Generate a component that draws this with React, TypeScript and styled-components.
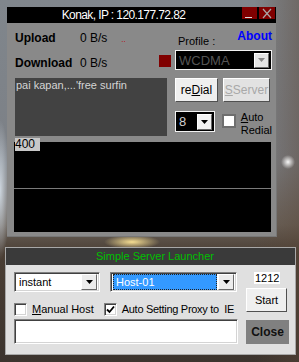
import React from "react";
import styled, { createGlobalStyle } from "styled-components";

const GlobalStyle = createGlobalStyle`
  html, body { margin: 0; padding: 0; }
  body {
    width: 299px;
    height: 362px;
    overflow: hidden;
    font-family: "Liberation Sans", Arial, sans-serif;
    background:
      radial-gradient(circle at 288px 162px, rgba(255,255,255,0.95) 0, rgba(255,255,255,0) 7px),
      radial-gradient(ellipse 28px 7px at 132px 242px, rgba(255,230,150,0.95), rgba(255,230,150,0) 100%),
      radial-gradient(ellipse 10px 70px at 0px 190px, rgba(215,225,235,0.9), rgba(215,225,235,0) 100%),
      linear-gradient(to right, rgba(0,0,0,0) 85%, rgba(90,70,55,0.45) 100%),
      linear-gradient(to bottom, #80868c 0%, #7c8086 45%, #6a625a 62%, #4a3e34 70%, #3c342e 100%);
  }
`;

const Screen = styled.div`
  display: flex;
  flex-direction: column;
  align-items: flex-start;
  padding-top: 7px;
`;

/* ---------- dialer window ---------- */

const MainWindow = styled.div`
  margin-left: 7px;
  width: 270px;
  height: 230px;
  box-sizing: border-box;
  background: #898989;
  border-right: 1px solid #777;
  border-bottom: 1px solid #777;
  display: flex;
  flex-direction: column;
`;

const TitleBar = styled.div`
  height: 16px;
  background: #000;
  display: flex;
  align-items: flex-start;
  padding-right: 1px;
`;

const TitleText = styled.div`
  flex: 1;
  text-align: center;
  color: #fff;
  font-size: 12px;
  letter-spacing: -0.6px;
  line-height: 16px;
`;

const CaptionButton = styled.div<{ $w: number }>`
  width: ${({ $w }) => $w}px;
  height: 12px;
  margin-left: 2px;
  background: #800000;
  display: flex;
  align-items: flex-end;
  justify-content: center;
`;

const MinBar = styled.div`
  width: 7px;
  height: 1px;
  margin: 0 3px 1px 0;
  background: #ddd;
`;

const TopBody = styled.div`
  display: flex;
  flex-direction: column;
  padding: 0 4px 0 8px;
`;

const TopGrid = styled.div`
  display: grid;
  grid-template-columns: 156px 97px;
  column-gap: 4px;
`;

const Column = styled.div`
  display: flex;
  flex-direction: column;
`;

const StatRow = styled.div<{ $top: number }>`
  display: flex;
  align-items: center;
  height: 15px;
  margin-top: ${({ $top }) => $top}px;
`;

const StatLabel = styled.span`
  width: 65px;
  font-weight: bold;
  font-size: 12px;
  color: #000;
`;

const StatValue = styled.span`
  font-size: 12px;
  color: #000;
`;

const Dots = styled.span`
  margin-left: 14px;
  margin-top: 4px;
  font-size: 8px;
  color: #c00000;
`;

const Led = styled.div`
  margin-left: auto;
  align-self: flex-start;
  width: 12px;
  height: 12px;
  background: #800000;
`;

const LogBox = styled.div`
  margin-top: 8px;
  width: 152px;
  height: 58px;
  box-sizing: border-box;
  padding: 1px 1px;
  background: #424242;
  color: #d4d4d4;
  font-size: 11px;
  line-height: 13px;
`;

const HeadRow = styled.div`
  height: 27px;
  box-sizing: border-box;
  padding-top: 6px;
  display: flex;
  justify-content: space-between;
  align-items: flex-start;
`;

const ProfileLabel = styled.span`
  margin: 6px 0 0 3px;
  font-size: 11px;
  color: #000;
`;

const AboutLink = styled.span`
  font-weight: bold;
  font-size: 12px;
  color: #0000ff;
`;

const DarkSelect = styled.div<{ $h: number; $w?: number; $size: number; $color: string }>`
  height: ${({ $h }) => $h}px;
  width: ${({ $w }) => ($w ? `${$w}px` : "auto")};
  box-sizing: border-box;
  border: 1px solid #f2f2f2;
  background: #000;
  display: flex;
  align-items: center;
  padding-left: 3px;
  color: ${({ $color }) => $color};
  font-size: ${({ $size }) => $size}px;
`;

const SelectText = styled.span`
  flex: 1;
`;

const DropButton = styled.div<{ $w: number; $h: number; $bg: string }>`
  width: ${({ $w }) => $w}px;
  height: ${({ $h }) => $h}px;
  flex-shrink: 0;
  margin-right: 2px;
  box-sizing: border-box;
  background: ${({ $bg }) => $bg};
  border: 1px solid;
  border-color: #fff #6a6a6a #6a6a6a #fff;
  display: flex;
  align-items: center;
  justify-content: center;
`;

const ButtonRow = styled.div`
  display: flex;
  gap: 5px;
  margin-top: 8px;
`;

const WinButton = styled.div<{ $w: number; $disabled?: boolean }>`
  width: ${({ $w }) => $w}px;
  height: 24px;
  box-sizing: border-box;
  border: 1px solid;
  border-color: #fff #505050 #505050 #fff;
  background: ${({ $disabled }) => ($disabled ? "#e2e2e2" : "#efefef")};
  color: ${({ $disabled }) => ($disabled ? "#a8a8a8" : "#000")};
  font-size: 12px;
  display: flex;
  align-items: center;
  justify-content: center;
`;

const OptionRow = styled.div`
  display: flex;
  align-items: flex-start;
  margin-top: 9px;
`;

const AutoBox = styled.div`
  margin: 3px 0 0 7px;
  width: 14px;
  height: 14px;
  box-sizing: border-box;
  border: 2px solid #6e6e6e;
  background: #fff;
`;

const AutoLabel = styled.div`
  margin-left: 5px;
  font-size: 11px;
  line-height: 13px;
  color: #000;
`;

const Chart = styled.div`
  position: relative;
  margin: 5px 1px 0 -1px;
  height: 90px;
  background: #000;

  &::after {
    content: "";
    position: absolute;
    left: 0;
    right: 0;
    top: 46px;
    height: 1px;
    background: #7a7a7a;
  }
`;

const ChartScale = styled.div`
  position: absolute;
  top: -4px;
  left: 1px;
  width: 25px;
  height: 13px;
  background: #c8c8c8;
  color: #000;
  font-size: 12px;
  line-height: 13px;
`;

/* ---------- launcher window ---------- */

const LauncherWindow = styled.div`
  margin: 10px 0 0 5px;
  width: 291px;
  height: 108px;
  box-sizing: border-box;
  border: 1px solid #a8a8a8;
  background: #e0e0e0;
  display: flex;
  flex-direction: column;
`;

const LauncherTitle = styled.div`
  height: 17px;
  background: #3a3a3a;
  color: #00c000;
  font-size: 11px;
  line-height: 17px;
  text-align: center;
  padding-left: 9px;
`;

const LauncherBody = styled.div`
  display: flex;
  padding: 7px 0 0 8px;
`;

const LeftCol = styled.div`
  width: 224px;
  display: flex;
  flex-direction: column;
`;

const ComboRow = styled.div`
  display: flex;
  gap: 10px;
`;

const Sunken = styled.div`
  box-sizing: border-box;
  background: #fff;
  border: 1px solid;
  border-color: #808080 #fff #fff #808080;
  box-shadow: inset 1px 1px #404040, inset -1px -1px #d4d4d4;
`;

const Combo = styled(Sunken)<{ $w: number }>`
  width: ${({ $w }) => $w}px;
  height: 20px;
  display: flex;
  align-items: center;
  padding-left: 2px;
  font-size: 11px;
  color: #000;
`;

const ComboText = styled.span`
  flex: 1;
  padding-left: 2px;
`;

const Highlight = styled.div`
  flex: 1;
  height: 16px;
  margin-right: 1px;
  box-sizing: border-box;
  border: 1px dotted #222;
  background: #3399ff;
  color: #fff;
  padding-left: 2px;
  line-height: 14px;
`;

const CheckRow = styled.div`
  display: flex;
  align-items: center;
  margin-top: 10px;
  height: 14px;
  white-space: nowrap;
`;

const CheckBox = styled(Sunken)<{ $gap?: number }>`
  width: 13px;
  height: 13px;
  flex-shrink: 0;
  margin-left: ${({ $gap }) => $gap ?? 0}px;
  display: flex;
  align-items: center;
  justify-content: center;
`;

const CheckLabel = styled.span<{ $tight?: boolean }>`
  margin-left: 5px;
  flex-shrink: 0;
  font-size: 11px;
  letter-spacing: ${({ $tight }) => ($tight ? "-0.3px" : "0")};
  color: #000;
`;

const InputBox = styled(Sunken)`
  margin-top: 3px;
  height: 25px;
`;

const RightCol = styled.div`
  margin-left: 8px;
  display: flex;
  flex-direction: column;
  align-items: flex-start;
`;

const PortLabel = styled.div`
  margin-left: 8px;
  height: 12px;
  padding: 0 1px;
  background: #fff;
  color: #000;
  font-size: 11px;
  line-height: 12px;
`;

const StartButton = styled(WinButton)`
  margin-top: 4px;
  font-size: 11px;
`;

const CloseButton = styled.div`
  margin-top: 8px;
  width: 43px;
  height: 24px;
  background: #808080;
  color: #111;
  font-weight: bold;
  font-size: 12px;
  display: flex;
  align-items: center;
  justify-content: center;
`;

const Arrow = ({ color }: { color: string }) => (
  <svg width="7" height="4" viewBox="0 0 7 4">
    <polygon points="0,0 7,0 3.5,4" fill={color} />
  </svg>
);

export default function App() {
  return (
    <>
      <GlobalStyle />
      <Screen>
        <MainWindow>
          <TitleBar>
            <TitleText>Konak, IP : 120.177.72.82</TitleText>
            <CaptionButton $w={15}>
              <MinBar />
            </CaptionButton>
            <CaptionButton $w={16}>
              <svg width="16" height="12" viewBox="0 0 16 12">
                <path d="M4 2 L12 11 M12 2 L4 11" stroke="#a8a8a8" strokeWidth="1.2" />
              </svg>
            </CaptionButton>
          </TitleBar>
          <TopBody>
            <TopGrid>
              <Column>
                <StatRow $top={7}>
                  <StatLabel>Upload</StatLabel>
                  <StatValue>0 B/s</StatValue>
                  <Dots>..</Dots>
                </StatRow>
                <StatRow $top={10}>
                  <StatLabel>Download</StatLabel>
                  <StatValue>0 B/s</StatValue>
                  <Led />
                </StatRow>
                <LogBox>pai kapan,...'free surfin</LogBox>
              </Column>
              <Column>
                <HeadRow>
                  <ProfileLabel>Profile :</ProfileLabel>
                  <AboutLink>About</AboutLink>
                </HeadRow>
                <DarkSelect $h={20} $size={13} $color="#555">
                  <SelectText>WCDMA</SelectText>
                  <DropButton $w={15} $h={15} $bg="#e4e4e4">
                    <Arrow color="#888" />
                  </DropButton>
                </DarkSelect>
                <ButtonRow>
                  <WinButton $w={43}>
                    <span>
                      re<u>D</u>ial
                    </span>
                  </WinButton>
                  <WinButton $w={47} $disabled>
                    <span>
                      <u>S</u>Server
                    </span>
                  </WinButton>
                </ButtonRow>
                <OptionRow>
                  <DarkSelect $h={21} $w={41} $size={13} $color="#cfcfcf">
                    <SelectText>8</SelectText>
                    <DropButton $w={15} $h={16} $bg="#f2f2f2">
                      <Arrow color="#000" />
                    </DropButton>
                  </DarkSelect>
                  <AutoBox />
                  <AutoLabel>
                    <u>A</u>uto
                    <br />
                    Redial
                  </AutoLabel>
                </OptionRow>
              </Column>
            </TopGrid>
            <Chart>
              <ChartScale>400</ChartScale>
            </Chart>
          </TopBody>
        </MainWindow>

        <LauncherWindow>
          <LauncherTitle>Simple Server Launcher</LauncherTitle>
          <LauncherBody>
            <LeftCol>
              <ComboRow>
                <Combo $w={86}>
                  <ComboText>instant</ComboText>
                  <DropButton $w={16} $h={16} $bg="#ececec">
                    <Arrow color="#000" />
                  </DropButton>
                </Combo>
                <Combo $w={127}>
                  <Highlight>Host-01</Highlight>
                  <DropButton $w={16} $h={16} $bg="#ececec">
                    <Arrow color="#000" />
                  </DropButton>
                </Combo>
              </ComboRow>
              <CheckRow>
                <CheckBox />
                <CheckLabel>
                  <u>M</u>anual Host
                </CheckLabel>
                <CheckBox $gap={10}>
                  <svg width="9" height="9" viewBox="0 0 9 9">
                    <path d="M1 4.5 L3.5 7 L8 1.5" stroke="#000" strokeWidth="1.8" fill="none" />
                  </svg>
                </CheckBox>
                <CheckLabel $tight>Auto Setting Proxy to&nbsp; IE</CheckLabel>
              </CheckRow>
              <InputBox />
            </LeftCol>
            <RightCol>
              <PortLabel>1212</PortLabel>
              <StartButton $w={41}>Start</StartButton>
              <CloseButton>Close</CloseButton>
            </RightCol>
          </LauncherBody>
        </LauncherWindow>
      </Screen>
    </>
  );
}
